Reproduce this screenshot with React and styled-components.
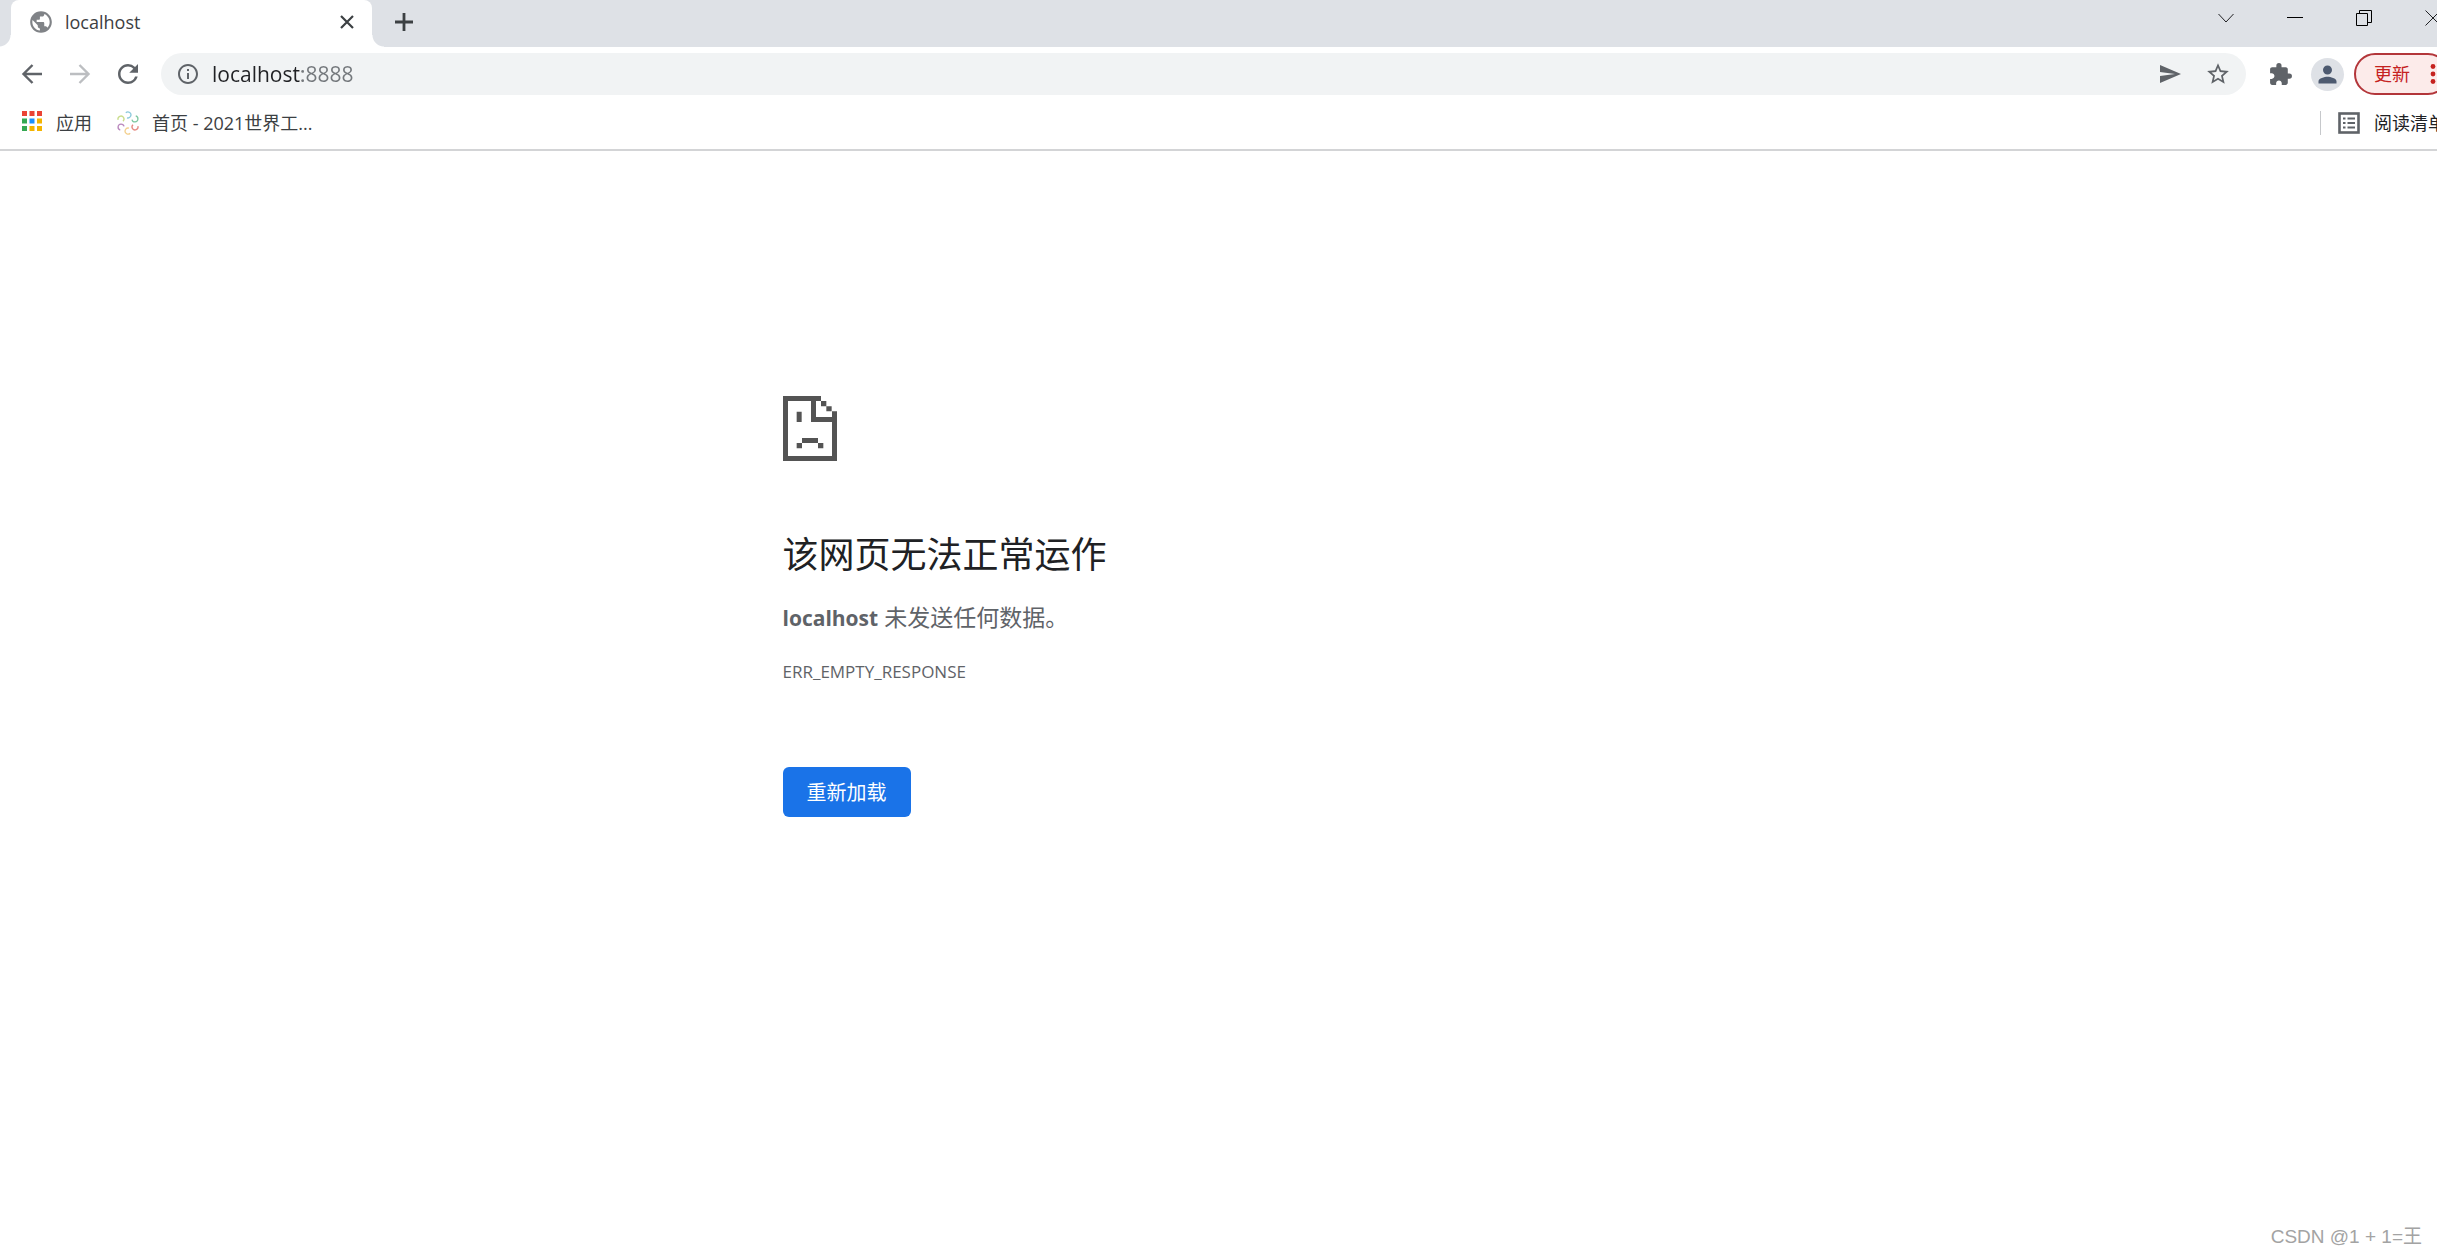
import React from 'react';
import styled, { createGlobalStyle } from 'styled-components';
import {
  MdExtension,
  MdInfoOutline,
  MdPerson,
  MdPublic,
  MdRefresh,
  MdSend,
  MdStarBorder,
} from 'react-icons/md';

const GlobalStyle = createGlobalStyle`
  * {
    box-sizing: border-box;
  }

  body {
    margin: 0;
    background: #ffffff;
    color: #3c4043;
    font-family: 'Open Sans', 'Noto Sans CJK SC', sans-serif;
  }

  button,
  input {
    font-family: inherit;
  }
`;

const Page = styled.div`
  min-height: 100vh;
  display: flex;
  flex-direction: column;
  overflow: hidden;
`;

/* The window runs a little past the right edge of the screen */
const BrowserChrome = styled.header`
  width: calc(100% + 24px);
  border-bottom: 2px solid #d3d4d6;
`;

const IconButton = styled.button`
  display: flex;
  align-items: center;
  justify-content: center;
  flex: none;
  width: ${({ $width }) => $width || 24}px;
  height: ${({ $height }) => $height || 24}px;
  padding: 0;
  border: none;
  background: none;
  color: ${({ $color }) => $color || '#5f6368'};
  cursor: pointer;

  svg {
    flex: none;
  }
`;

const TabStrip = styled.div`
  display: flex;
  height: 47px;
  padding-left: 11px;
  background: #dee1e6;
`;

const Tab = styled.div`
  position: relative;
  display: flex;
  align-items: center;
  width: 361px;
  padding: 0 13px 3px 17px;
  border-radius: 8px 8px 0 0;
  background: #ffffff;

  &::before,
  &::after {
    content: '';
    position: absolute;
    bottom: 0;
    width: 12px;
    height: 12px;
  }

  &::before {
    right: 100%;
    background: radial-gradient(circle at 0 0, transparent 11px, #ffffff 12px);
  }

  &::after {
    left: 100%;
    background: radial-gradient(circle at 100% 0, transparent 11px, #ffffff 12px);
  }
`;

const TabTitle = styled.span`
  flex: 1;
  margin-left: 11px;
  font-size: 18px;
  line-height: 24px;
`;

const NewTab = styled(IconButton)`
  margin-left: 20px;
`;

const WindowControls = styled.div`
  display: flex;
  margin-left: auto;
  margin-right: -6px;
  height: 35px;
`;

const Toolbar = styled.div`
  display: flex;
  align-items: center;
  height: 54px;
  padding: 0 12px 0 20px;
`;

const NavButtons = styled.nav`
  display: flex;
  gap: 24px;
`;

const Omnibox = styled.div`
  display: flex;
  align-items: center;
  flex: 1;
  height: 42px;
  margin-left: 21px;
  padding: 0 16px 0 15px;
  border-radius: 21px;
  background: #f1f3f4;
`;

const Address = styled.input`
  flex: 1;
  min-width: 0;
  height: 32px;
  margin: 0 12px;
  padding: 0;
  border: none;
  outline: none;
  /* host in black, port in grey */
  background: linear-gradient(to right, #202124 90px, #74787c 90px);
  background-clip: text;
  color: transparent;
  font-size: 21px;
`;

const OmniboxActions = styled.div`
  display: flex;
  gap: 24px;
`;

const Extensions = styled(IconButton)`
  margin-left: 22px;
`;

const Avatar = styled(IconButton)`
  margin: 0 10px 0 19px;
  border-radius: 50%;
  background: #dee1e6;
`;

const UpdateButton = styled.button`
  display: flex;
  align-items: center;
  justify-content: space-between;
  width: 95px;
  height: 42px;
  padding: 0 11px 0 18px;
  border: 2px solid #b3363a;
  border-radius: 21px;
  background: #fcebea;
  color: #c5221f;
  font-size: 18px;
  line-height: 24px;
  white-space: nowrap;
`;

const BookmarksBar = styled.div`
  display: flex;
  align-items: center;
  height: 48px;
  padding: 0 15px 4px 20px;
`;

const Bookmark = styled.a`
  display: flex;
  align-items: center;
  gap: 12px;
  margin-right: 24px;
  color: #3c4043;
  font-size: 18px;
  line-height: 24px;
  text-decoration: none;
  white-space: nowrap;
`;

const ReadingList = styled.button`
  display: flex;
  align-items: center;
  gap: 14px;
  height: 24px;
  margin-left: auto;
  padding: 0 0 0 17px;
  border: none;
  border-left: 1px solid #c6c8cb;
  background: none;
  color: #202124;
  font-size: 18px;
  line-height: 24px;
  white-space: nowrap;

  svg {
    color: #5f6368;
  }
`;

const ErrorPage = styled.main`
  width: 900px;
  max-width: 100%;
  margin: 0 auto;
  padding: 245px 14px 0;
  color: #5f6368;
`;

const Heading = styled.h1`
  margin: 68px 0 0;
  color: #202124;
  font-size: 36px;
  font-weight: 400;
  line-height: 52px;
`;

const Message = styled.p`
  margin: 19px 0 0;
  font-size: 23px;
  line-height: 34px;
`;

const Host = styled.strong`
  font-size: 21px;
`;

const ErrorCode = styled.p`
  margin: 24px 0 0;
  font-size: 17px;
  line-height: 26px;
`;

const ReloadButton = styled.button`
  height: 50px;
  margin-top: 82px;
  padding: 2px 24px 0;
  border: none;
  border-radius: 6px;
  background: #1a73e8;
  color: #ffffff;
  font-size: 20px;
  line-height: 30px;
  cursor: pointer;
`;

const Watermark = styled.footer`
  margin-top: auto;
  padding: 0 15px 5px;
  color: #a3a3a3;
  font-family: 'Liberation Sans', 'Noto Sans CJK SC', sans-serif;
  font-size: 19px;
  line-height: 24px;
  text-align: right;
`;

const ArrowIcon = ({ forward }) => (
  <svg width="24" height="24" viewBox="0 0 24 24" fill="none" stroke="currentColor" strokeWidth="2.4">
    <path d={forward ? 'M2 12h18.500M11.500 3l9 9-9 9' : 'M22 12H3.500M12.500 3l-9 9 9 9'} />
  </svg>
);

const APP_COLORS = [
  '#ea4335', '#ea4335', '#ea4335',
  '#34a853', '#1a90ff', '#f4b400',
  '#34a853', '#f4b400', '#f4b400',
];

const AppsIcon = () => (
  <svg width="24" height="24" viewBox="0 0 24 24" aria-hidden="true">
    {APP_COLORS.map((color, i) => (
      <rect
        key={i}
        x={2 + (i % 3) * 7.5}
        y={Math.floor(i / 3) * 7.5}
        width="5"
        height="5"
        fill={color}
      />
    ))}
  </svg>
);

const PETALS = ['#8cc9dc', '#7fc8a0', '#e58a80', '#f3cf8c', '#b987bd', '#c9dc8a'];

const FlowerIcon = () => (
  <svg width="24" height="24" viewBox="0 0 24 24" fill="none" strokeWidth="1.3" aria-hidden="true">
    {PETALS.map((color, i) => (
      <path
        key={color}
        d="M9.800 1.800A3 3 0 1 1 11 6.800"
        stroke={color}
        transform={`rotate(${i * 60} 12 12)`}
      />
    ))}
  </svg>
);

const ListIcon = () => (
  <svg width="22" height="22" viewBox="0 0 22 22" fill="none" stroke="currentColor" aria-hidden="true">
    <rect x="1.5" y="1.5" width="19" height="19" strokeWidth="2.6" />
    <path d="M5 6.500h2.500M5 11h2.500M5 15.500h2.500M9.500 6.500H17M9.500 11H17M9.500 15.500H17" strokeWidth="2.2" />
  </svg>
);

const DotsIcon = () => (
  <svg width="6" height="24" viewBox="0 0 6 24" fill="currentColor" aria-hidden="true">
    <circle cx="3" cy="4.500" r="2.400" />
    <circle cx="3" cy="12" r="2.400" />
    <circle cx="3" cy="19.500" r="2.400" />
  </svg>
);

const SadPageIcon = () => (
  <svg width="54" height="65" viewBox="0 0 162 195" fill="#545454" aria-hidden="true" display="block">
    <path d="M0 0h114v15H99v48h48V46h15v149H0zM15 15v165h132V78H84V15z" fillRule="evenodd" />
    <path d="M114 15h16v16h-16zM130 31h16v15h-16z" />
    <path d="M41 47h15v31H41zM57 126h48v15H57zM41 141h16v16H41zM105 141h16v16h-16z" />
  </svg>
);

const App = () => (
  <Page>
    <GlobalStyle />
    <BrowserChrome>
      <TabStrip>
        <Tab>
          <MdPublic size={26} color="#808387" />
          <TabTitle>localhost</TabTitle>
          <IconButton aria-label="关闭标签页" $color="#3c4043">
            <svg width="14" height="14" viewBox="0 0 14 14" stroke="currentColor" strokeWidth="2.200">
              <path d="M1 1l12 12M13 1L1 13" />
            </svg>
          </IconButton>
        </Tab>
        <NewTab aria-label="新标签页" $color="#3c4043" $height={44}>
          <svg width="18" height="18" viewBox="0 0 18 18" stroke="currentColor" strokeWidth="2.800">
            <path d="M9 0v18M0 9h18" />
          </svg>
        </NewTab>
        <WindowControls>
          <IconButton aria-label="搜索标签页" $width={69} $height={35} $color="#202124">
            <svg width="16" height="16" viewBox="0 0 16 16" fill="none" stroke="currentColor">
              <path d="M0.500 4L8 12l7.500-8" />
            </svg>
          </IconButton>
          <IconButton aria-label="最小化" $width={69} $height={35} $color="#000000">
            <svg width="16" height="16" viewBox="0 0 16 16" stroke="currentColor">
              <path d="M0 7.500h16" />
            </svg>
          </IconButton>
          <IconButton aria-label="还原" $width={69} $height={35} $color="#000000">
            <svg width="16" height="16" viewBox="0 0 16 16" fill="none" stroke="currentColor">
              <path d="M0.500 3.500h11v12H.5zM3.500 3.500v-3h12v12h-4" />
            </svg>
          </IconButton>
          <IconButton aria-label="关闭" $width={69} $height={35} $color="#202124">
            <svg width="16" height="16" viewBox="0 0 16 16" stroke="currentColor">
              <path d="M0.500 0.500l15 15M15.500 0.500l-15 15" />
            </svg>
          </IconButton>
        </WindowControls>
      </TabStrip>

      <Toolbar>
        <NavButtons>
          <IconButton aria-label="后退">
            <ArrowIcon />
          </IconButton>
          <IconButton aria-label="前进" $color="#bcbec1" disabled>
            <ArrowIcon forward />
          </IconButton>
          <IconButton aria-label="重新加载此页">
            <MdRefresh size={30} />
          </IconButton>
        </NavButtons>
        <Omnibox>
          <MdInfoOutline size={24} color="#5f6368" />
          <Address aria-label="地址" type="text" defaultValue="localhost:8888" />
          <OmniboxActions>
            <IconButton aria-label="发送">
              <MdSend size={24} />
            </IconButton>
            <IconButton aria-label="收藏">
              <MdStarBorder size={26} />
            </IconButton>
          </OmniboxActions>
        </Omnibox>
        <Extensions aria-label="扩展程序">
          <MdExtension size={25} />
        </Extensions>
        <Avatar aria-label="用户" $width={33} $height={33} $color="#4d5a70">
          <MdPerson size={27} />
        </Avatar>
        <UpdateButton>
          更新
          <DotsIcon />
        </UpdateButton>
      </Toolbar>

      <BookmarksBar>
        <Bookmark href="#apps">
          <AppsIcon />
          应用
        </Bookmark>
        <Bookmark href="#home">
          <FlowerIcon />
          首页 - 2021世界工...
        </Bookmark>
        <ReadingList>
          <ListIcon />
          阅读清单
        </ReadingList>
      </BookmarksBar>
    </BrowserChrome>

    <ErrorPage>
      <SadPageIcon />
      <Heading>该网页无法正常运作</Heading>
      <Message>
        <Host>localhost</Host> 未发送任何数据。
      </Message>
      <ErrorCode>ERR_EMPTY_RESPONSE</ErrorCode>
      <ReloadButton>重新加载</ReloadButton>
    </ErrorPage>

    <Watermark>CSDN @1 + 1=王</Watermark>
  </Page>
);

export default App;
